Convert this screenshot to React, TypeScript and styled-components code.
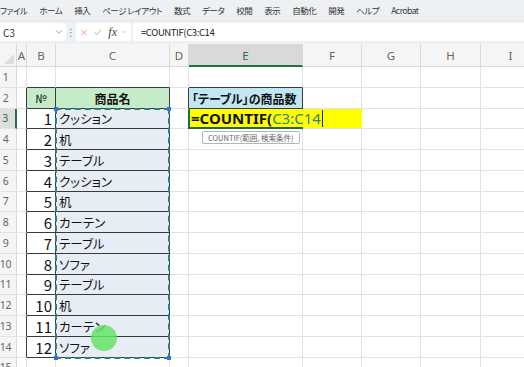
import React from "react";
import styled, { createGlobalStyle, css } from "styled-components";
import { X, Check, ChevronDown } from "lucide-react";

const GlobalStyle = createGlobalStyle`
  html, body { margin: 0; padding: 0; background: #ffffff; }
  body { font-family: "Noto Sans CJK JP", "Noto Sans", sans-serif; overflow: hidden; }
  * { box-sizing: border-box; }
`;

const JP = `"Noto Sans CJK JP", "Noto Sans", sans-serif`;

const Window = styled.div`
  position: relative;
  width: 524px;
  height: 367px;
  overflow: hidden;
  background: #ffffff;
  display: flex;
  flex-direction: column;
`;

const TabStrip = styled.div`
  height: 20px;
  flex: none;
  display: flex;
  align-items: center;
  gap: 12px;
  padding-left: 0;
  background: #eef1f4;
  font-family: ${JP};
  font-size: 8.5px;
  letter-spacing: -0.5px;
  font-feature-settings: "palt";
  color: #333333;
  white-space: nowrap;
`;

const Tab = styled.span`
  line-height: 20px;
`;

const FormulaBar = styled.div`
  height: 24px;
  flex: none;
  display: flex;
  align-items: center;
  padding: 2px 0 3px 0;
  background: #eef1f4;
  border-top: 1px solid #e3e6ea;
`;

const NameBox = styled.div`
  width: 66px;
  height: 18px;
  display: flex;
  align-items: center;
  justify-content: space-between;
  padding: 0 2px 0 3px;
  background: #ffffff;
  border-radius: 0 3px 3px 0;
  font-family: ${JP};
  font-size: 10px;
  color: #333;
`;

const Dots = styled.div`
  width: 10px;
  display: flex;
  justify-content: center;
  color: #777;
  font-family: "DejaVu Sans", sans-serif;
  font-size: 10px;
`;

const FuncBox = styled.div`
  width: 55px;
  height: 18px;
  display: flex;
  align-items: center;
  gap: 4px;
  padding: 0 3px;
  background: #ffffff;
  border-radius: 3px;
`;

const Fx = styled.span`
  font-family: "Liberation Serif", serif;
  font-style: italic;
  font-size: 12px;
  color: #444;
  margin-left: 2px;
`;

const FormulaInput = styled.div`
  flex: 1;
  height: 18px;
  margin-left: 2px;
  display: flex;
  align-items: center;
  padding-left: 8px;
  background: #ffffff;
  border-radius: 3px 0 0 3px;
  font-family: ${JP};
  font-size: 9.5px;
  letter-spacing: -0.4px;
  color: #222;
`;

const Sheet = styled.div`
  position: relative;
  flex: none;
  display: grid;
  grid-template-columns: 17px 10px 29px 114px 19px 114px 59px 59px 60px 60px;
  grid-template-rows: 23px repeat(15, 20.75px);
  width: 541px;
`;

type Pos = { $r: number; $c: number };

const place = css<Pos>`
  grid-row: ${(p) => p.$r};
  grid-column: ${(p) => p.$c};
`;

const Corner = styled.div<Pos>`
  ${place};
  position: relative;
  background: #f5f5f5;
  border-right: 1px solid #dadada;
  border-bottom: 1px solid #dadada;
  &::after {
    content: "";
    position: absolute;
    right: 2px;
    bottom: 2px;
    width: 0;
    height: 0;
    border-left: 10px solid transparent;
    border-bottom: 10px solid #dcdcdc;
  }
`;

const ColHead = styled.div<Pos & { $sel?: boolean }>`
  ${place};
  display: flex;
  align-items: center;
  justify-content: center;
  background: ${(p) => (p.$sel ? "#d9d9d9" : "#f5f5f5")};
  border-right: 1px solid #dadada;
  border-bottom: ${(p) => (p.$sel ? "2px solid #1f7244" : "1px solid #dadada")};
  font-family: "Noto Sans", sans-serif;
  font-size: 11.5px;
  color: ${(p) => (p.$sel ? "#2c6e45" : "#666")};
  padding-top: 1px;
`;

const RowHead = styled.div<Pos & { $sel?: boolean }>`
  ${place};
  display: flex;
  align-items: center;
  justify-content: center;
  padding-right: 5px;
  background: ${(p) => (p.$sel ? "#dedede" : "#f5f5f5")};
  border-right: ${(p) => (p.$sel ? "2px solid #1f7244" : "1px solid #dadada")};
  border-bottom: 1px solid #e2e2e2;
  font-family: "Noto Sans", sans-serif;
  font-size: 10.5px;
  letter-spacing: -0.3px;
  color: ${(p) => (p.$sel ? "#2c6e45" : "#666")};
  white-space: nowrap;
`;

type CellProps = Pos & {
  $bg?: string;
  $rb?: string;
  $bb?: string;
  $align?: "left" | "right" | "center";
  $bold?: boolean;
  $size?: number;
};

const Cell = styled.div<CellProps>`
  ${place};
  display: flex;
  align-items: flex-end;
  justify-content: ${(p) =>
    p.$align === "right" ? "flex-end" : p.$align === "center" ? "center" : "flex-start"};
  padding: 0 3px 0 3px;
  background: ${(p) => p.$bg || "#ffffff"};
  border-right: 1px solid ${(p) => p.$rb || "#e1e1e1"};
  border-bottom: 1px solid ${(p) => p.$bb || "#e1e1e1"};
  font-family: ${JP};
  font-feature-settings: "palt";
  font-size: ${(p) => p.$size || 12.5}px;
  font-weight: ${(p) => (p.$bold ? 700 : 400)};
  line-height: 19px;
  color: #111;
  white-space: nowrap;
  overflow: visible;
`;

const EditCell = styled.div`
  grid-row: 4;
  grid-column: 6 / 8;
  position: relative;
  z-index: 2;
  display: flex;
  align-items: center;
  padding-left: 2px;
  background: #ffff00;
  border-bottom: 1px solid #e1e1e1;
  font-family: "Noto Sans", sans-serif;
  font-size: 15px;
  line-height: 20px;
  white-space: nowrap;
`;

const ActiveFrame = styled.div`
  grid-row: 4;
  grid-column: 6;
  z-index: 3;
  margin-left: -1px;
  border-left: 2px solid #1f6b40;
  border-bottom: 2px solid #1f6b40;
  pointer-events: none;
`;

const FuncName = styled.span`
  font-weight: 700;
  color: #111;
`;

const RangeRef = styled.span`
  font-weight: 400;
  color: #2f8583;
`;

const Caret = styled.span`
  display: inline-block;
  width: 1px;
  height: 17px;
  margin-left: 1px;
  background: #222;
`;

const Tip = styled.div`
  position: absolute;
  left: 13px;
  top: 22px;
  height: 13px;
  padding: 0 5px;
  display: flex;
  align-items: center;
  background: #ffffff;
  border: 1px solid #b5b5b5;
  border-radius: 2px;
  font-family: ${JP};
  font-size: 7.5px;
  color: #666;
  line-height: 11px;
  white-space: nowrap;
`;

const RangeMarker = styled.div`
  grid-row: 4 / 16;
  grid-column: 4;
  position: relative;
  z-index: 2;
  margin: -1px 0 -1px -1px;
  border: 2px dashed #2f7f7c;
  pointer-events: none;
`;

const Handle = styled.span<{ $v: "top" | "bottom"; $h: "left" | "right" }>`
  position: absolute;
  width: 4px;
  height: 4px;
  background: #3a6fd0;
  ${(p) => p.$v}: -3px;
  ${(p) => p.$h}: -3px;
`;

const Cursor = styled.div`
  position: absolute;
  left: 91px;
  top: 325px;
  width: 26px;
  height: 26px;
  border-radius: 50%;
  background: rgba(100, 228, 100, 0.85);
  z-index: 5;
  pointer-events: none;
`;

const tabs = [
  "ファイル", "ホーム", "挿入", "ページ レイアウト", "数式", "データ",
  "校閲", "表示", "自動化", "開発", "ヘルプ", "Acrobat",
];

const cols = ["A", "B", "C", "D", "E", "F", "G", "H", "I"];

const items = [
  "クッション", "机", "テーブル", "クッション", "机", "カーテン",
  "テーブル", "ソファ", "テーブル", "机", "カーテン", "ソファ",
];

const DARK = "#3a3a3a";
const HEAD_BG = "#c6ebc9";
const BODY_BG = "#e6edf5";
const TITLE_BG = "#c2e6f4";

export default function App() {
  const rows: React.ReactNode[] = [];
  for (let r = 1; r <= 15; r++) {
    const gr = r + 1;
    rows.push(
      <RowHead key={`rh${r}`} $r={gr} $c={1} $sel={r === 3}>
        {r}
      </RowHead>
    );
    const inTable = r >= 2 && r <= 14;
    rows.push(<Cell key={`a${r}`} $r={gr} $c={2} $rb={inTable ? DARK : undefined} />);
    if (r === 1) {
      rows.push(<Cell key={`b${r}`} $r={gr} $c={3} $bb={DARK} />);
      rows.push(<Cell key={`c${r}`} $r={gr} $c={4} $bb={DARK} />);
    } else if (r === 2) {
      rows.push(
        <Cell key={`b${r}`} $r={gr} $c={3} $bg={HEAD_BG} $rb={DARK} $bb={DARK} $align="center" $size={11.5}>
          №
        </Cell>
      );
      rows.push(
        <Cell key={`c${r}`} $r={gr} $c={4} $bg={HEAD_BG} $rb={DARK} $bb={DARK} $align="center" $bold $size={12}>
          商品名
        </Cell>
      );
    } else if (inTable) {
      rows.push(
        <Cell key={`b${r}`} $r={gr} $c={3} $rb={DARK} $bb={DARK} $align="right" $size={15}>
          {r - 2}
        </Cell>
      );
      rows.push(
        <Cell key={`c${r}`} $r={gr} $c={4} $bg={BODY_BG} $rb={DARK} $bb={DARK}>
          {items[r - 3]}
        </Cell>
      );
    } else {
      rows.push(<Cell key={`b${r}`} $r={gr} $c={3} />);
      rows.push(<Cell key={`c${r}`} $r={gr} $c={4} />);
    }
    rows.push(<Cell key={`d${r}`} $r={gr} $c={5} $rb={r === 2 ? DARK : undefined} />);
    if (r === 1) {
      rows.push(<Cell key={`e${r}`} $r={gr} $c={6} $bb={DARK} />);
    } else if (r === 2) {
      rows.push(
        <Cell key={`e${r}`} $r={gr} $c={6} $bg={TITLE_BG} $rb={DARK} $bb={DARK} $bold $size={12}>
          「テーブル」の商品数
        </Cell>
      );
    } else if (r !== 3) {
      rows.push(<Cell key={`e${r}`} $r={gr} $c={6} />);
    }
    for (let c = 7; c <= 10; c++) {
      if (r === 3 && c === 7) continue;
      rows.push(<Cell key={`x${r}-${c}`} $r={gr} $c={c} />);
    }
  }

  return (
    <>
      <GlobalStyle />
      <Window>
        <TabStrip>
          {tabs.map((t) => (
            <Tab key={t}>{t}</Tab>
          ))}
        </TabStrip>
        <FormulaBar>
          <NameBox>
            <span>C3</span>
            <ChevronDown size={10} color="#666" strokeWidth={1.5} />
          </NameBox>
          <Dots>⋮</Dots>
          <FuncBox>
            <X size={11} color="#e0504b" strokeWidth={1.4} />
            <Check size={11} color="#3f9a5f" strokeWidth={1.4} />
            <Fx>fx</Fx>
            <ChevronDown size={8} color="#888" strokeWidth={1.5} />
          </FuncBox>
          <FormulaInput>=COUNTIF(C3:C14</FormulaInput>
        </FormulaBar>
        <Sheet>
          <Corner $r={1} $c={1} />
          {cols.map((c, i) => (
            <ColHead key={c} $r={1} $c={i + 2} $sel={c === "E"}>
              {c}
            </ColHead>
          ))}
          <ColHead $r={1} $c={11} />
          {rows}
          <EditCell>
            <FuncName>=COUNTIF(</FuncName>
            <RangeRef>C3:C14</RangeRef>
            <Caret />
            <Tip>COUNTIF(範囲, 検索条件)</Tip>
          </EditCell>
          <ActiveFrame />
          <RangeMarker>
            <Handle $v="top" $h="left" />
            <Handle $v="top" $h="right" />
            <Handle $v="bottom" $h="left" />
            <Handle $v="bottom" $h="right" />
          </RangeMarker>
        </Sheet>
        <Cursor />
      </Window>
    </>
  );
}
